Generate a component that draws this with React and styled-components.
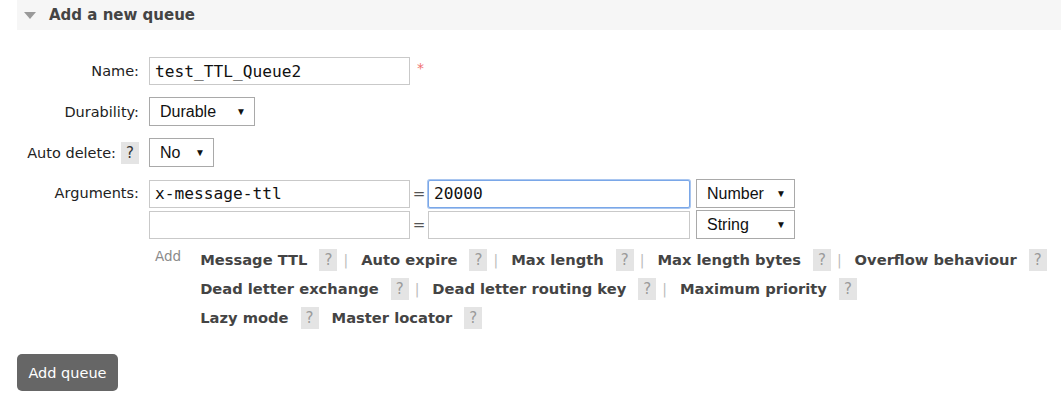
import React from "react";
import styled, { createGlobalStyle } from "styled-components";

const Global = createGlobalStyle`
  html, body { margin: 0; padding: 0; background: #fff; }
  body { font-family: "DejaVu Sans", Verdana, sans-serif; color: #222; }
`;

const Page = styled.div`
  padding-left: 17px;
`;

const SectionHeader = styled.div`
  display: flex;
  align-items: center;
  gap: 13px;
  height: 30px;
  padding-left: 7px;
  background: #f6f6f6;
`;

const Triangle = styled.span`
  width: 0;
  height: 0;
  border-left: 6px solid transparent;
  border-right: 6px solid transparent;
  border-top: 7px solid #9a9a9a;
  margin-top: 1px;
`;

const Title = styled.h2`
  margin: 0;
  font-size: 15px;
  font-weight: bold;
  color: #444;
`;

const Form = styled.div`
  display: grid;
  grid-template-columns: 122px 1fr;
  column-gap: 10px;
  row-gap: 12px;
  margin-top: 27px;
`;

const Label = styled.div`
  display: flex;
  justify-content: flex-end;
  align-items: center;
  gap: 5px;
  font-size: 14.5px;
  color: #222;
  height: ${(p) => p.$h || 28}px;
  white-space: nowrap;
`;

const Help = styled.span`
  display: inline-flex;
  align-items: center;
  justify-content: center;
  width: 18px;
  height: 22px;
  background: #e4e4e4;
  color: ${(p) => (p.$light ? "#9a9a9a" : "#333")};
  font-weight: normal;
  font-size: 15px;
`;

const Field = styled.div`
  display: flex;
  align-items: center;
  gap: 7px;
`;

const TextInput = styled.input`
  box-sizing: border-box;
  width: ${(p) => p.$w || 261}px;
  height: 28px;
  border: 1px solid ${(p) => (p.$focus ? "#7aa7e8" : "#c9c9c9")};
  box-shadow: ${(p) => (p.$focus ? "0 0 0 1px #a9c6f0" : "none")};
  border-radius: ${(p) => (p.$focus ? "2px" : "0")};
  padding: 0 5px;
  font-family: "DejaVu Sans Mono", Consolas, monospace;
  font-size: 16.2px;
  color: #111;
  outline: none;
  background: #fff;
`;

const Required = styled.span`
  color: #f07070;
  font-size: 14px;
  align-self: flex-start;
  margin-top: 3px;
`;

const SelectBox = styled.div`
  box-sizing: border-box;
  display: flex;
  align-items: center;
  justify-content: space-between;
  width: ${(p) => p.$w}px;
  height: 29px;
  border: 1px solid #a9a9a9;
  padding: 0 8px 0 10px;
  font-family: "Liberation Sans", Arial, sans-serif;
  font-size: 16px;
  color: #111;
  background: #fff;
`;

const Arrow = styled.span`
  font-size: 10px;
  color: #111;
`;

const ArgGrid = styled.div`
  display: grid;
  grid-template-columns: 261px 18px 262px 99px;
  column-gap: 0;
  row-gap: 2px;
  align-items: center;
`;

const Eq = styled.span`
  text-align: center;
  font-size: 15px;
  color: #555;
`;

const TypeCell = styled.div`
  padding-left: 6px;
`;

const AddRow = styled.div`
  display: flex;
  gap: 19px;
  padding-left: 6px;
  margin-top: -6px;
`;

const AddLabel = styled.span`
  color: #8a8a8a;
  font-size: 13.5px;
  padding-top: 3px;
`;

const Links = styled.div`
  display: flex;
  flex-direction: column;
`;

const LinkLine = styled.div`
  display: flex;
  align-items: center;
  height: 29px;
  gap: 13px;
`;

const ArgLink = styled.span`
  font-weight: bold;
  font-size: 14.7px;
  color: #444;
`;

const Sep = styled.span`
  color: #bbb;
  font-size: 14px;
  margin-left: -6px;
`;

const Item = styled.span`
  display: inline-flex;
  align-items: center;
  gap: 12px;
`;

const Button = styled.button`
  margin-top: 22px;
  width: 101px;
  height: 37px;
  border: none;
  border-radius: 5px;
  background: #666;
  color: #fff;
  font-family: "DejaVu Sans", Verdana, sans-serif;
  font-size: 14.5px;
  padding: 0;
  cursor: pointer;
`;

const Spacer = styled.div``;

const lines = [
  [["Message TTL", true], ["Auto expire", true], ["Max length", true], ["Max length bytes", true], ["Overflow behaviour", false]],
  [["Dead letter exchange", true], ["Dead letter routing key", true], ["Maximum priority", false]],
  [["Lazy mode", false], ["Master locator", false]],
];

export default function App() {
  return (
    <Page>
      <Global />
      <SectionHeader>
        <Triangle />
        <Title>Add a new queue</Title>
      </SectionHeader>
      <Form>
        <Label $h={28}>Name:</Label>
        <Field>
          <TextInput defaultValue="test_TTL_Queue2" />
          <Required>*</Required>
        </Field>

        <Label $h={29}>Durability:</Label>
        <Field>
          <SelectBox $w={106}>
            Durable <Arrow>▼</Arrow>
          </SelectBox>
        </Field>

        <Label $h={29}>
          Auto delete: <Help>?</Help>
        </Label>
        <Field>
          <SelectBox $w={65}>
            No <Arrow>▼</Arrow>
          </SelectBox>
        </Field>

        <Label $h={28}>Arguments:</Label>
        <ArgGrid>
          <TextInput defaultValue="x-message-ttl" />
          <Eq>=</Eq>
          <TextInput $w={262} $focus defaultValue="20000" />
          <TypeCell>
            <SelectBox $w={99}>
              Number <Arrow>▼</Arrow>
            </SelectBox>
          </TypeCell>
          <TextInput defaultValue="" />
          <Eq>=</Eq>
          <TextInput $w={262} defaultValue="" />
          <TypeCell>
            <SelectBox $w={99}>
              String <Arrow>▼</Arrow>
            </SelectBox>
          </TypeCell>
        </ArgGrid>

        <Spacer />
        <AddRow>
          <AddLabel>Add</AddLabel>
          <Links>
            {lines.map((line, i) => (
              <LinkLine key={i}>
                {line.map(([name, sep], j) => (
                  <Item key={j}>
                    <ArgLink>{name}</ArgLink>
                    <Help $light>?</Help>
                    {sep && <Sep>|</Sep>}
                  </Item>
                ))}
              </LinkLine>
            ))}
          </Links>
        </AddRow>
      </Form>
      <Button>Add queue</Button>
    </Page>
  );
}
